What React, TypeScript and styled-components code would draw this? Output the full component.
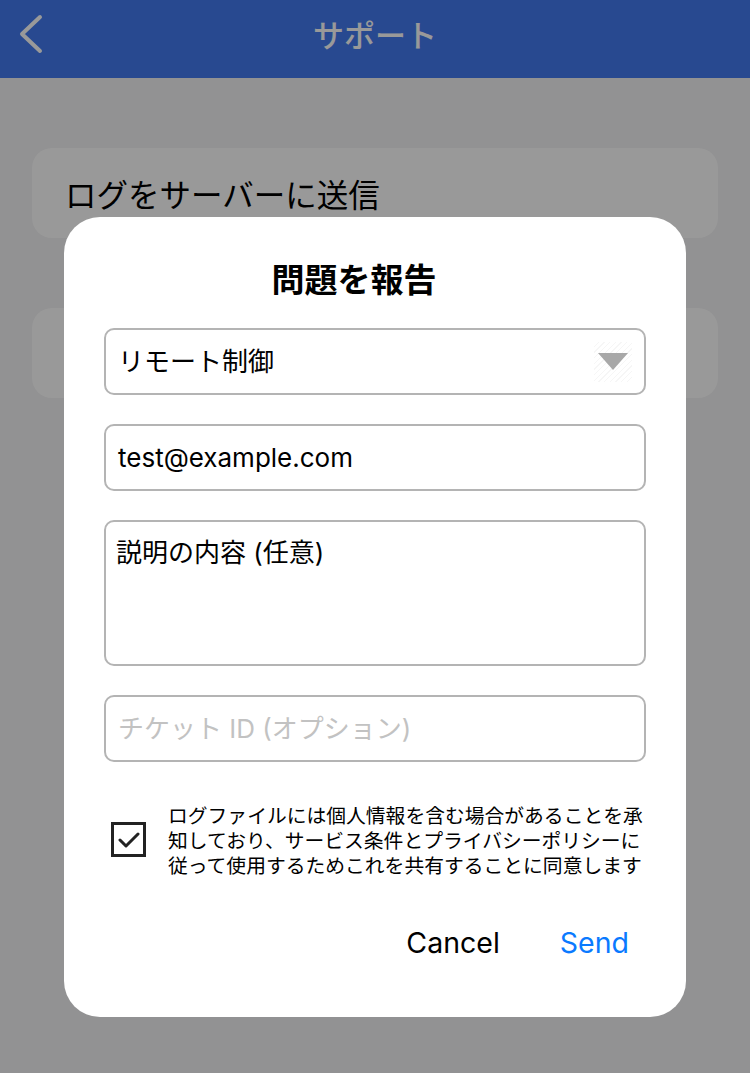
import React from 'react';
import styled, { createGlobalStyle } from 'styled-components';

const GlobalStyle = createGlobalStyle`
  html, body {
    margin: 0;
    padding: 0;
    background: #f3f3f5;
    font-family: Inter, "Noto Sans CJK JP", sans-serif;
  }
  * { box-sizing: border-box; }
`;

const Page = styled.div`
  width: 750px;
  height: 1073px;
  position: relative;
  overflow: hidden;
  background: #f3f3f5;
`;

const Header = styled.header`
  height: 78px;
  background: #437bf0;
  display: flex;
  align-items: center;
  justify-content: center;
  position: relative;
`;

const BackButton = styled.div`
  position: absolute;
  left: 16px;
  top: 14px;
  width: 30px;
  height: 40px;
  display: flex;
  align-items: center;
`;

const HeaderTitle = styled.h1`
  margin: 0;
  font-size: 31px;
  font-weight: 500;
  color: #ffffff;
  font-family: "Noto Sans CJK JP", sans-serif;
  padding-bottom: 12px;
`;

const Content = styled.div`
  padding: 70px 32px 0;
  display: flex;
  flex-direction: column;
  gap: 70px;
`;

const MenuCard = styled.div`
  height: 90px;
  border-radius: 20px;
  background: #ffffff;
  display: flex;
  align-items: center;
  padding: 0 33px;
  font-size: 31.5px;
  color: #000;
  font-family: "Noto Sans CJK JP", sans-serif;
`;

const Overlay = styled.div`
  position: absolute;
  inset: 0;
  background: rgba(0, 0, 0, 0.4);
  display: flex;
  justify-content: center;
  align-items: flex-start;
  padding-top: 217px;
`;

const Dialog = styled.div`
  width: 622px;
  background: #ffffff;
  border-radius: 36px;
  padding: 40px 40px 54px;
  display: flex;
  flex-direction: column;
  gap: 29px;
`;

const DialogTitle = styled.h2`
  margin: 0;
  padding-right: 42px;
  text-align: center;
  font-size: 33px;
  line-height: 42px;
  font-weight: 700;
  color: #000;
  font-family: "Noto Sans CJK JP", sans-serif;
`;

const Field = styled.div<{ $tall?: boolean }>`
  height: ${(p) => (p.$tall ? '146px' : '67px')};
  border: 2px solid #b4b4b4;
  border-radius: 10px;
  display: flex;
  align-items: ${(p) => (p.$tall ? 'flex-start' : 'center')};
  justify-content: space-between;
  padding: ${(p) => (p.$tall ? '14px 10px 0 10px' : '0 12px 0 12px')};
`;

const FieldText = styled.span<{ $placeholder?: boolean }>`
  font-size: 26px;
  line-height: 34px;
  color: ${(p) => (p.$placeholder ? '#c2c2c2' : '#000')};
  font-family: Inter, "Noto Sans CJK JP", sans-serif;
`;

const Caret = styled.div`
  width: 38px;
  height: 40px;
  display: flex;
  align-items: center;
  justify-content: center;
  background: repeating-linear-gradient(
    135deg,
    #ffffff 0px,
    #ffffff 3px,
    #f6f6f6 3px,
    #f6f6f6 4px
  );
`;

const ConsentRow = styled.div`
  display: flex;
  align-items: center;
  gap: 22px;
  padding-left: 7px;
  margin-top: 11px;
`;

const CheckBox = styled.div`
  width: 35px;
  height: 35px;
  flex-shrink: 0;
  border: 3px solid #222;
  display: flex;
  align-items: center;
  justify-content: center;
`;

const ConsentText = styled.p`
  margin: 0;
  font-size: 19.8px;
  line-height: 25px;
  color: #000;
  font-family: "Noto Sans CJK JP", sans-serif;
`;

const Actions = styled.div`
  display: flex;
  justify-content: flex-end;
  gap: 60px;
  padding-right: 17px;
  margin-top: 17px;
`;

const ActionButton = styled.button<{ $primary?: boolean }>`
  border: none;
  background: none;
  padding: 0;
  font-size: 28.5px;
  line-height: 40px;
  font-family: Inter, sans-serif;
  color: ${(p) => (p.$primary ? '#0a7aff' : '#000')};
`;

const App: React.FC = () => {
  return (
    <Page>
      <GlobalStyle />
      <Header>
        <BackButton>
          <svg width="30" height="40" viewBox="0 0 30 40">
            <polyline
              points="24,3 6,20 24,37"
              fill="none"
              stroke="#ffffff"
              strokeWidth="4"
              strokeLinecap="round"
              strokeLinejoin="round"
            />
          </svg>
        </BackButton>
        <HeaderTitle>サポート</HeaderTitle>
      </Header>
      <Content>
        <MenuCard>ログをサーバーに送信</MenuCard>
        <MenuCard />
      </Content>
      <Overlay>
        <Dialog>
          <DialogTitle>問題を報告</DialogTitle>
          <Field>
            <FieldText>リモート制御</FieldText>
            <Caret>
              <svg width="30" height="18" viewBox="0 0 30 18">
                <polygon points="0,0 30,0 15,17" fill="#a8a8a8" />
              </svg>
            </Caret>
          </Field>
          <Field>
            <FieldText>test@example.com</FieldText>
          </Field>
          <Field $tall>
            <FieldText>説明の内容 (任意)</FieldText>
          </Field>
          <Field>
            <FieldText $placeholder>チケット ID (オプション)</FieldText>
          </Field>
          <ConsentRow>
            <CheckBox>
              <svg width="22" height="18" viewBox="0 0 22 18">
                <polyline
                  points="2,9 8,15 20,3"
                  fill="none"
                  stroke="#222"
                  strokeWidth="3"
                  strokeLinecap="round"
                  strokeLinejoin="round"
                />
              </svg>
            </CheckBox>
            <ConsentText>
              ログファイルには個人情報を含む場合があることを承知しており、サービス条件とプライバシーポリシーに従って使用するためこれを共有することに同意します
            </ConsentText>
          </ConsentRow>
          <Actions>
            <ActionButton>Cancel</ActionButton>
            <ActionButton $primary>Send</ActionButton>
          </Actions>
        </Dialog>
      </Overlay>
    </Page>
  );
};

export default App;
